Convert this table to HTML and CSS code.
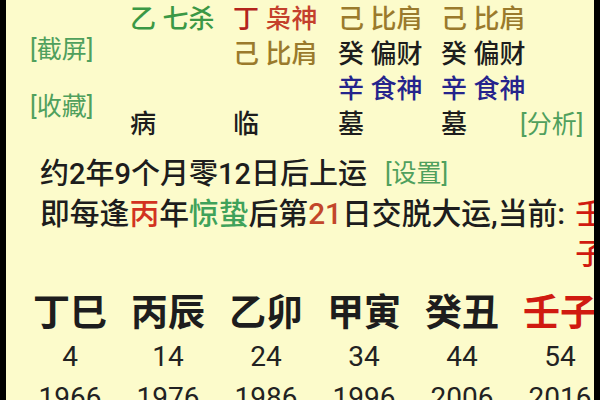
FILE: index.html
```html
<!DOCTYPE html>
<html lang="zh">
<head>
<meta charset="utf-8">
<title>大运</title>
<link rel="stylesheet" href="styles.css">
</head>
<body>
<div class="screen">
  <div class="top">
    <div class="side">
      <span class="tag">[截屏]</span>
      <span class="tag">[收藏]</span>
    </div>
    <div class="cell green">乙 七杀</div>
    <div class="cell"><span class="dred">丁</span> <span class="rbrown">枭神</span></div>
    <div class="cell olive">己 比肩</div>
    <div class="cell olive">己 比肩</div>
    <div class="cell"></div>

    <div class="cell"></div>
    <div class="cell olive">己 比肩</div>
    <div class="cell ink">癸 偏财</div>
    <div class="cell ink">癸 偏财</div>
    <div class="cell"></div>

    <div class="cell"></div>
    <div class="cell"></div>
    <div class="cell blue">辛 食神</div>
    <div class="cell blue">辛 食神</div>
    <div class="cell"></div>

    <div class="cell ink">病</div>
    <div class="cell ink">临</div>
    <div class="cell ink">墓</div>
    <div class="cell ink">墓</div>
    <div class="cell"><span class="tag">[分析]</span></div>
  </div>

  <div class="info">
    <p class="line">约2年9个月零12日后上运<span class="tag set">[设置]</span></p>
    <p class="line wide">即每逢<span class="red">丙</span>年<span class="lgreen">惊蛰</span>后第<span class="brick">21</span>日交脱大运,当前:<span class="now">壬子</span></p>
  </div>

  <div class="yun">
    <div class="col"><span class="gz">丁巳</span><span class="num">4</span><span class="num">1966</span></div>
    <div class="col"><span class="gz">丙辰</span><span class="num">14</span><span class="num">1976</span></div>
    <div class="col"><span class="gz">乙卯</span><span class="num">24</span><span class="num">1986</span></div>
    <div class="col"><span class="gz">甲寅</span><span class="num">34</span><span class="num">1996</span></div>
    <div class="col"><span class="gz">癸丑</span><span class="num">44</span><span class="num">2006</span></div>
    <div class="col cur"><span class="gz">壬子</span><span class="num">54</span><span class="num">2016</span></div>
  </div>
</div>
</body>
</html>
```

FILE: styles.css
```css
html, body {
  margin: 0;
  padding: 0;
  background: #000;
  height: 400px;
  overflow: hidden;
}

.screen {
  margin: 0 6px;
  height: 400px;
  background: #fcfbcb;
  overflow: hidden;
  font-family: Roboto, "Noto Sans CJK SC", sans-serif;
  font-weight: 500;
  color: #1d1d1d;
}

.top {
  display: grid;
  grid-template-columns: 124px 103px 105px 103px 79px 1fr;
  grid-auto-rows: 35px;
  padding-top: 2px;
}

.side {
  grid-row: 1 / span 4;
  display: flex;
  flex-direction: column;
  align-items: flex-start;
  padding: 33px 0 0 24px;
  gap: 27px;
}

.cell {
  font-size: 26px;
  line-height: 35px;
  white-space: nowrap;
}

.tag {
  font-size: 25px;
  font-weight: 400;
  line-height: 30px;
  color: #4fa05d;
  white-space: nowrap;
}

.green { color: #3b9845; }
.dred { color: #b3241c; }
.rbrown { color: #c4402c; }
.olive { color: #9a7a2c; }
.ink { color: #1d1d1d; }
.blue { color: #25248c; }
.red { color: #d2321f; }
.lgreen { color: #3fa25a; }
.brick { color: #c2462a; }

.info {
  padding: 12px 0 0 34px;
}

.line {
  margin: 0;
  font-size: 29px;
  line-height: 40px;
  white-space: nowrap;
}

.wide {
  font-size: 29.8px;
}

.set {
  margin-left: 18px;
  vertical-align: top;
  line-height: 40px;
}

.now {
  display: inline-block;
  width: 1em;
  margin-left: 10px;
  white-space: normal;
  vertical-align: top;
  color: #d01a10;
}

.yun {
  display: flex;
  gap: 24px;
  padding: 18px 0 0 27px;
}

.col {
  flex: 0 0 74px;
  display: flex;
  flex-direction: column;
  align-items: center;
}

.gz {
  font-size: 37px;
  font-weight: 700;
  line-height: 44px;
  white-space: nowrap;
}

.cur .gz { color: #d01a10; }

.num {
  font-size: 28px;
  font-weight: 400;
  line-height: 41px;
  color: #222;
}
```
